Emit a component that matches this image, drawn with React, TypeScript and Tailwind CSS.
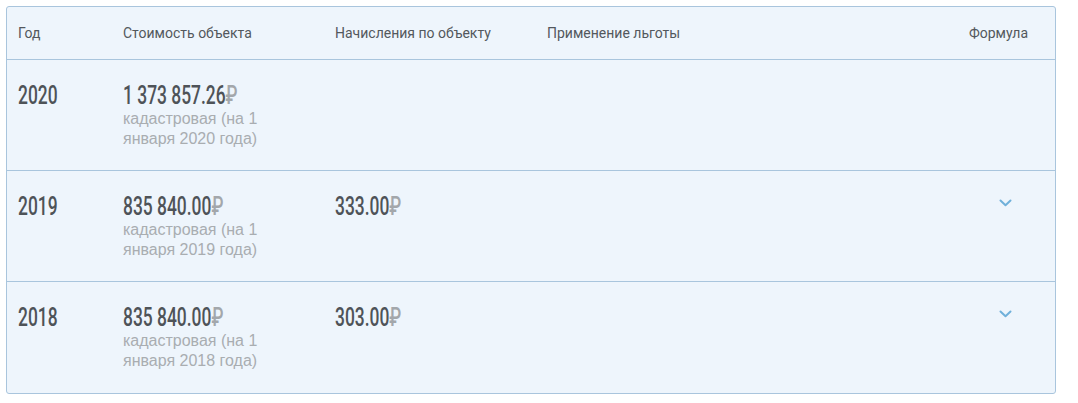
import React from "react";

const rows = [
  { year: "2020", cost: "1 373 857.26", date: "2020", charge: null as string | null },
  { year: "2019", cost: "835 840.00", date: "2019", charge: "333.00" },
  { year: "2018", cost: "835 840.00", date: "2018", charge: "303.00" },
];

function Big({ value, rub = true }: { value: string; rub?: boolean }) {
  return (
    <span className="inline-block origin-left scale-x-[0.67] whitespace-nowrap font-['Roboto',sans-serif] text-[26px] font-medium leading-[30px] text-[#4e5358]">
      {value}
      {rub && <span className="text-[#a3a7ab]">₽</span>}
    </span>
  );
}

function Chevron() {
  return (
    <svg width="13" height="8" viewBox="0 0 13 8" className="mt-[8px] mr-[16px]">
      <path d="M1.5 1.5 L6.5 6.2 L11.5 1.5" fill="none" stroke="#6fb0da" strokeWidth="2" strokeLinecap="round" strokeLinejoin="round" />
    </svg>
  );
}

export default function App() {
  return (
    <div className="min-h-[403px] bg-white p-[6px] pr-[22px]">
      <div className="rounded-[3px] border border-[#a9c5dd] bg-[#eef5fc]">
        <div className="grid h-[53px] grid-cols-[105px_212px_212px_1fr_auto] items-center border-b border-[#a9c5dd] pl-[11px] pr-[27px] font-['Roboto',sans-serif] text-[14px] text-[#53585d]">
          <div>Год</div>
          <div>Стоимость объекта</div>
          <div>Начисления по объекту</div>
          <div>Применение льготы</div>
          <div>Формула</div>
        </div>
        {rows.map((r, i) => (
          <div
            key={r.year}
            className={`grid h-[111px] grid-cols-[105px_212px_212px_1fr_auto] items-start pl-[11px] pr-[27px] pt-[20px] ${i < rows.length - 1 ? "border-b border-[#a9c5dd]" : ""}`}
          >
            <div>
              <Big value={r.year} rub={false} />
            </div>
            <div>
              <Big value={r.cost} />
              <div className="-mt-[1px] font-['Liberation_Sans',sans-serif] text-[16px] leading-[20px] text-[#a9adb1]">
                кадастровая (на 1
                <br />
                января {r.date} года)
              </div>
            </div>
            <div>{r.charge && <Big value={r.charge} />}</div>
            <div />
            <div className="flex justify-end">{r.charge ? <Chevron /> : <div className="w-[13px]" />}</div>
          </div>
        ))}
      </div>
    </div>
  );
}
